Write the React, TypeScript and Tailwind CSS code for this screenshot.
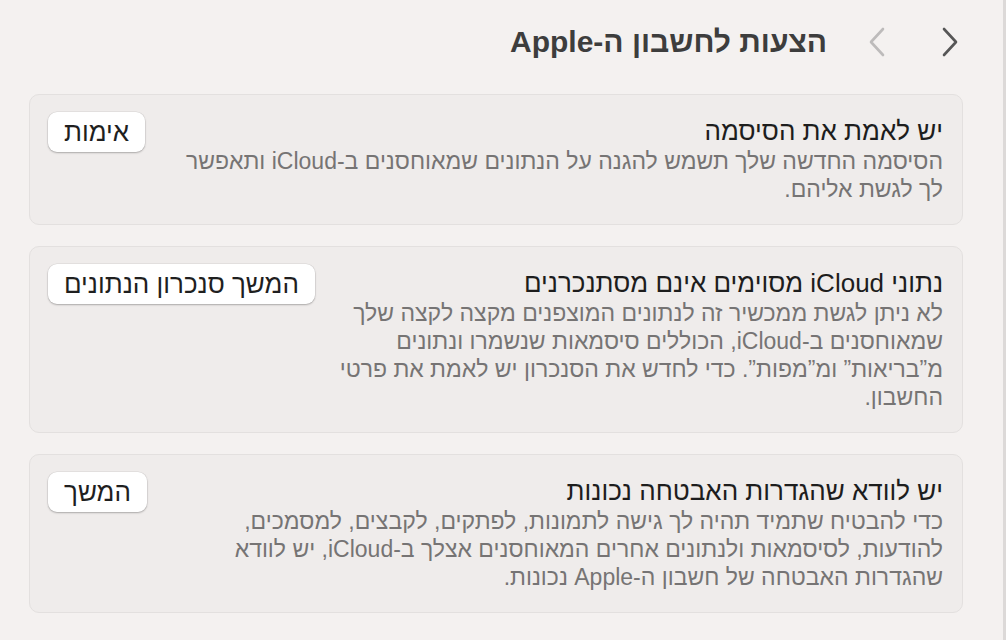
import React from 'react';

type Suggestion = {
  title: string;
  body: string;
  action: string;
};

const suggestions: Suggestion[] = [
  {
    title: 'יש לאמת את הסיסמה',
    body: 'הסיסמה החדשה שלך תשמש להגנה על הנתונים שמאוחסנים ב-iCloud ותאפשר לך לגשת אליהם.',
    action: 'אימות',
  },
  {
    title: 'נתוני iCloud מסוימים אינם מסתנכרנים',
    body: 'לא ניתן לגשת ממכשיר זה לנתונים המוצפנים מקצה לקצה שלך שמאוחסנים ב-iCloud, הכוללים סיסמאות שנשמרו ונתונים מ”בריאות” ומ”מפות”. כדי לחדש את הסנכרון יש לאמת את פרטי החשבון.',
    action: 'המשך סנכרון הנתונים',
  },
  {
    title: 'יש לוודא שהגדרות האבטחה נכונות',
    body: 'כדי להבטיח שתמיד תהיה לך גישה לתמונות, לפתקים, לקבצים, למסמכים, להודעות, לסיסמאות ולנתונים אחרים המאוחסנים אצלך ב-iCloud, יש לוודא שהגדרות האבטחה של חשבון ה-Apple נכונות.',
    action: 'המשך',
  },
];

const Chevron: React.FC<{ dir: 'left' | 'right'; className: string }> = ({ dir, className }) => (
  <svg width="18" height="30" viewBox="0 0 18 30" fill="none" className={className}>
    <path
      d={dir === 'right' ? 'M3 2 L15 15 L3 28' : 'M15 2 L3 15 L15 28'}
      stroke="currentColor"
      strokeWidth="2.6"
      strokeLinecap="round"
      strokeLinejoin="round"
    />
  </svg>
);

const SuggestionCard: React.FC<{ item: Suggestion }> = ({ item }) => (
  <div className="flex items-start gap-3 rounded-[10px] border border-[#e3e0df] bg-[#efeceb] pr-[19px] pl-[18px] pt-[17px] pb-[21px]">
    <div className="flex-1 pt-[3px]">
      <h3 className="text-[26px] leading-[32px] text-[#1d1d1d]">{item.title}</h3>
      <p className="text-[23px] leading-[28px] text-[#767474]">{item.body}</p>
    </div>
    <button className="shrink-0 h-[40px] px-[16px] rounded-[9px] bg-white text-[26px] leading-none text-[#1f1f1f] shadow-[0_1px_2px_rgba(0,0,0,0.25),0_0_0_0.5px_rgba(0,0,0,0.08)]">
      {item.action}
    </button>
  </div>
);

export default function App() {
  return (
    <div
      dir="rtl"
      className="w-[1006px] h-[640px] overflow-hidden bg-[#f4f1f0] border-r-[3px] border-[#dcd9d8] font-['Liberation_Sans',sans-serif]"
    >
      <div className="pr-[40px] pl-[29px]">
        <header className="flex items-center h-[82px] pt-[1px] pr-[4px]">
          <Chevron dir="right" className="text-[#565656]" />
          <Chevron dir="left" className="mr-[55px] text-[#bdbbbb]" />
          <h1 className="mr-[41px] text-[30px] font-bold text-[#3d3d3d]">הצעות לחשבון ה-Apple</h1>
        </header>

        <div className="flex flex-col gap-[21px] mt-[12px]">
          {suggestions.map((s, i) => (
            <SuggestionCard key={i} item={s} />
          ))}
        </div>
      </div>
    </div>
  );
}
